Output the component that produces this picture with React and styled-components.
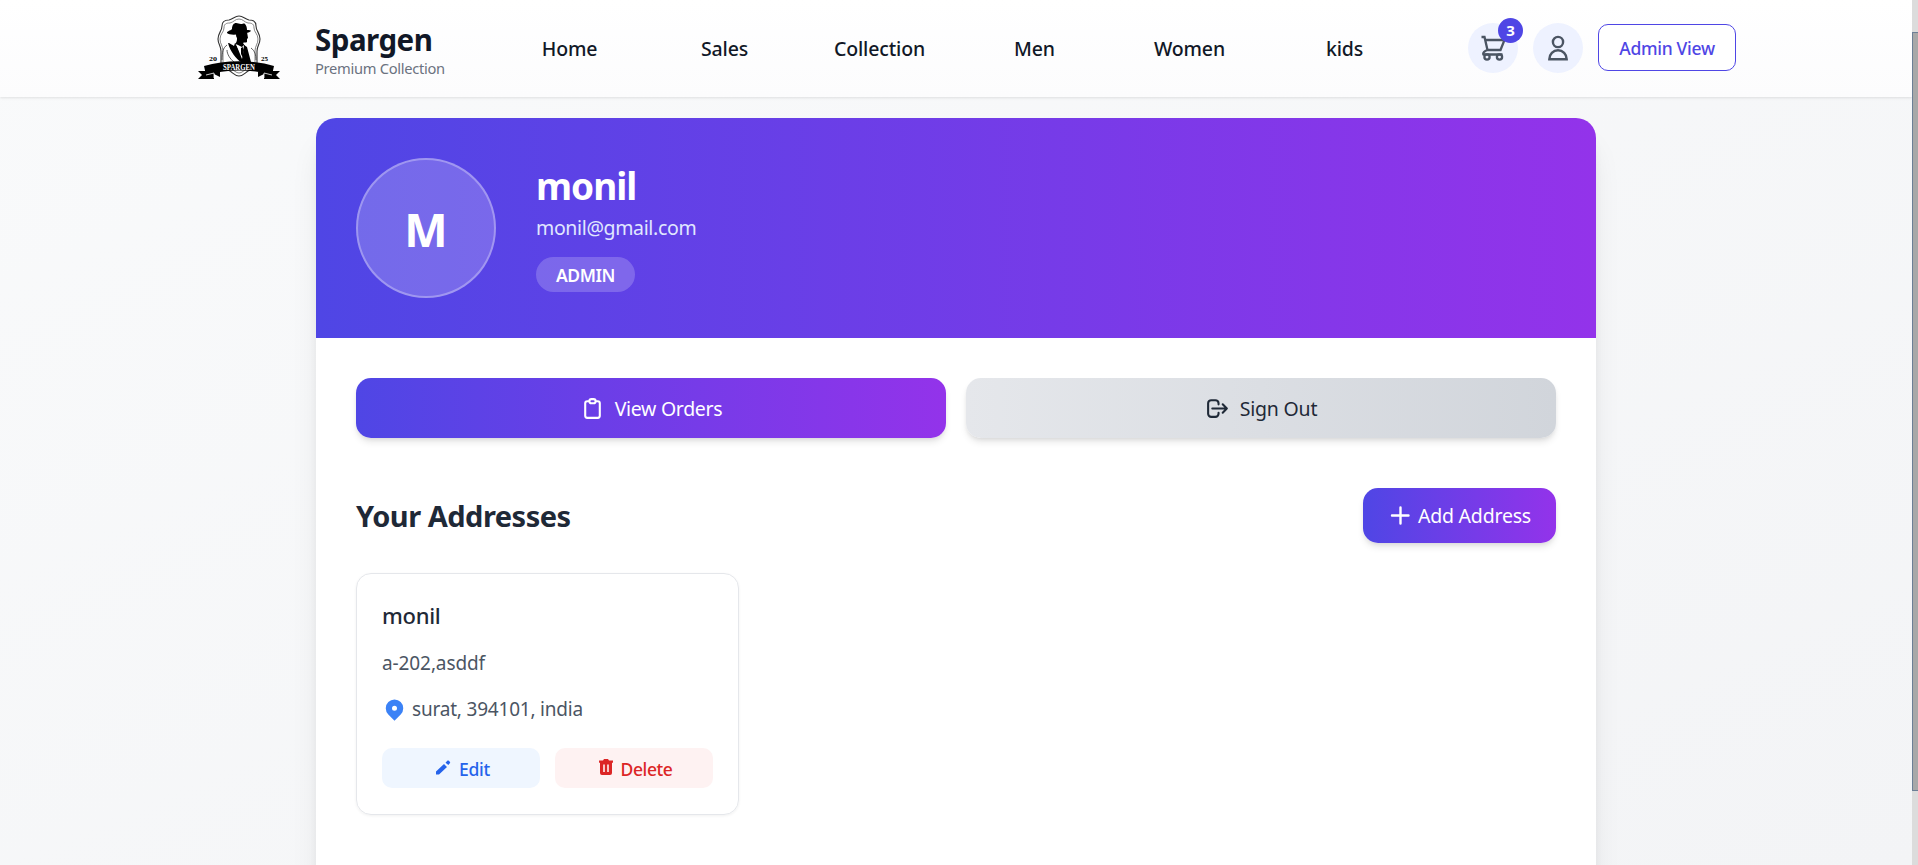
import React from 'react';
import styled, { createGlobalStyle } from 'styled-components';

const Global = createGlobalStyle`
  *{box-sizing:border-box}
  html,body{margin:0;height:865px;overflow:hidden}
  body{font-family:"Noto Sans","Open Sans",sans-serif;color:#1f2937}
  button{font-family:inherit;cursor:pointer}
`;
const brand = 'linear-gradient(to right,#4f46e5,#9333ea)';

const Text = styled.span`
  display:block;white-space:nowrap;margin:0;
  font-size:${p => p.$size}px;line-height:${p => p.$lh || p.$size * 1.4}px;
  font-weight:${p => p.$weight || 400};letter-spacing:${p => p.$track || 0}px;
  color:${p => p.$color || 'inherit'};
`;
const Screen = styled.div`display:flex;height:865px;width:1918px;overflow:hidden;`;
const Page = styled.div`
  width:1912px;flex:none;display:flex;flex-direction:column;
  background:linear-gradient(to bottom right,#f9fafb,#f3f4f6);
`;
const ScrollTrack = styled.div`flex:1;background:#dcdcdc;padding-top:32px;height:865px;`;
const ScrollThumb = styled.div`height:759px;background:#a8a8a8;border:1px solid #6c7f96;border-right:0;`;

const Header = styled.header`
  height:97px;flex:none;display:flex;align-items:center;padding:0 0 1px 196px;
  background:linear-gradient(to bottom,#fff,#fcfcfd);
  box-shadow:0 1px 3px rgba(0,0,0,.08),0 1px 2px rgba(0,0,0,.03);
`;
const Logo = styled.svg`width:84px;height:68px;flex:none;margin-top:2px;`;
const BrandName = styled.div`margin-left:35px;width:177px;padding-top:4px;`;
const Nav = styled.nav`display:flex;`;
const NavItem = styled.a`width:155px;display:flex;justify-content:center;padding-top:1px;`;
const HeaderActions = styled.div`display:flex;gap:15px;align-items:center;margin-left:46px;`;
const RoundButton = styled.div`
  position:relative;width:50px;height:50px;border-radius:50%;background:#eef2ff;color:#4b5563;
  display:flex;align-items:center;justify-content:center;
`;
const Badge = styled.div`
  position:absolute;top:-5px;right:-5px;width:25px;height:25px;border-radius:50%;
  background:#4f46e5;color:#fff;display:flex;align-items:center;justify-content:center;
`;
const OutlineButton = styled.button`
  width:138px;height:47px;margin-bottom:1px;border:1px solid #4f46e5;border-radius:10px;background:#fff;color:#4f46e5;
  display:flex;align-items:center;justify-content:center;padding:2px 0 0;
`;

const Card = styled.main`
  width:1280px;height:900px;flex:none;margin:21px 0 0 316px;border-radius:20px;overflow:hidden;background:#fff;
  box-shadow:0 25px 31px -6px rgba(0,0,0,.1),0 10px 13px -6px rgba(0,0,0,.1);
`;
const Profile = styled.section`
  height:220px;padding:0 40px;display:flex;align-items:center;gap:40px;background:${brand};color:#fff;
`;
const Avatar = styled.div`
  width:140px;height:140px;border-radius:50%;background:rgba(255,255,255,.2);
  border:2px solid rgba(255,255,255,.3);display:flex;align-items:center;justify-content:center;padding-top:3px;
`;
const Identity = styled.div`display:flex;flex-direction:column;align-items:flex-start;`;
const Role = styled.div`
  margin-top:9px;width:99px;height:35px;border-radius:18px;background:rgba(255,255,255,.2);
  display:flex;align-items:center;justify-content:center;padding-top:2px;
`;
const Body = styled.section`padding:40px;`;
const ActionRow = styled.div`display:grid;grid-template-columns:1fr 1fr;gap:20px;`;
const ActionButton = styled.button`
  height:${p => p.$h || 60}px;padding:${p => p.$pad || '0'};border:0;border-radius:15px;
  display:flex;align-items:center;justify-content:center;gap:${p => p.$gap || 10}px;
  color:${p => (p.$muted ? '#1f2937' : '#fff')};
  background:${p => (p.$muted ? 'linear-gradient(to right,#e5e7eb,#d1d5db)' : brand)};
  box-shadow:0 5px 7px -1px rgba(0,0,0,.1),0 2.5px 5px -2.5px rgba(0,0,0,.1);
  & > span{padding-top:1px}
`;
const SectionHead = styled.div`display:flex;justify-content:space-between;align-items:center;margin-top:50px;height:55px;`;
const Heading = styled.h2`margin:2px 0 0;font-weight:inherit;`;
const AddressCard = styled.article`
  width:383px;height:242px;margin-top:30px;border:1px solid #e5e7eb;border-radius:15px;padding:24px 25px;
  box-shadow:0 1px 3px rgba(0,0,0,.06);
`;
const Place = styled.div`display:flex;align-items:center;gap:5px;height:30px;`;
const CardActions = styled.div`display:grid;grid-template-columns:1fr 1fr;gap:15px;margin-top:24px;`;
const SoftButton = styled.button`
  height:40px;border:0;border-radius:10px;padding:0 0 0 3px;display:flex;align-items:center;justify-content:center;gap:8px;
  background:${p => (p.$danger ? '#fef2f2' : '#eff6ff')};color:${p => (p.$danger ? '#dc2626' : '#2563eb')};
  & > span{padding-top:2px}
`;

function SpargenLogo() {
  return (
    <Logo viewBox="0 0 84 68">
      <path d="M43 1c4 0 6 3 10 4 4 0 7 2 7 6 0 5 4 7 4 13 0 5-3 7-3 12v13c-1 5-5 5-9 7-3 2-5 5-9 5s-6-3-9-5c-4-2-8-2-9-7V36c0-5-3-7-3-12 0-6 4-8 4-13 0-4 3-6 7-6 4-1 6-4 10-4z" fill="#fff" stroke="#333" strokeWidth="1.1" />
      <path d="M43 4c4 0 5 3 9 4 4 0 6 1 6 5 0 4 4 6 4 11s-3 7-3 12v12c-1 4-5 4-8 6-3 1-5 4-8 4s-5-3-8-4c-3-2-7-2-8-6V36c0-5-3-7-3-12s4-7 4-11c0-4 2-5 6-5 4-1 5-4 9-4z" fill="none" stroke="#666" strokeWidth=".8" />
      <path d="M36 14c0-4 2-6 4-6 2 0 3 1 5 1s3-1 4 0c1 1 2 3 2 6 2 0 4 0 4 1-2 2-6 2.500-11 3-5 1-11 1-13-1 0-2 3-2 5-4z" fill="#000" />
      <path d="M40 18l11-1 1 6-1 1v3c-1 1-3 0-4 1l2 3-3 3-7-5c2-2 2-4 2-6-1-1-1-3-1-5z" fill="#000" />
      <path d="M32 28c2 0 4 2 6 3l1-3 7 12v8C40 44 34 36 32 28zM48 30l3 2 4 15H45l2-8z" fill="#000" />
      <path d="m40 29 6 3 2-2-1 9-1 5z" fill="#fff" /><path d="m45 33 2-1 1 3-1 8-2-4z" fill="#000" />
      <path d="M31 30c-4 3-5 7-5 15M31 35c0 4 3 9 7 12M55 33c4 3 5 7 5 12" fill="none" stroke="#333" strokeWidth=".8" />
      <path d="M9 56H2l4 4-4 4h16v-5l6 3v-5zM77 56h7l-4 4 4 4H68v-5l-6 3v-5z" fill="#000" />
      <path d="M8 51c21-6.500 49-6.500 70 0l-2 9c-19-6-47-6-66 0z" fill="#000" />
      <path d="m10 60 8-2v5M76 60l-8-2v5" fill="none" stroke="#fff" strokeWidth=".8" />
      <text x="43" y="54.500" textAnchor="middle" fontSize="8" fontWeight="700" fill="#fff" fontFamily="Liberation Serif,serif" textLength="32" lengthAdjust="spacingAndGlyphs">SPARGEN</text>
      <text x="13" y="45.500" fontSize="6.500" fontWeight="700" fontFamily="Liberation Serif,serif" textLength="8" lengthAdjust="spacingAndGlyphs">20</text>
      <text x="65" y="45.500" fontSize="6.500" fontWeight="700" fontFamily="Liberation Serif,serif" textLength="7" lengthAdjust="spacingAndGlyphs">25</text>
    </Logo>
  );
}
const CartIcon = () => (
  <svg width="26" height="26" viewBox="0 0 26 26" fill="none" stroke="currentColor" strokeWidth="2.3">
    <path d="M1.500 2h3l3 13h13l4-10H5.500M7.500 15c-3 1-5 3-4 4.500h19" />
    <circle cx="7" cy="22" r="2.600" /><circle cx="19.500" cy="22" r="2.600" />
  </svg>
);
const UserIcon = () => (
  <svg width="22" height="26" viewBox="0 0 22 26" fill="none" stroke="currentColor" strokeWidth="2.4">
    <circle cx="11" cy="7" r="5.100" /><path d="M2.300 24.300a8.700 9 0 0 1 17.400 0z" />
  </svg>
);
const ClipboardIcon = () => (
  <svg width="25" height="25" viewBox="0 0 24 24" fill="none" stroke="currentColor" strokeWidth="2" strokeLinecap="round" strokeLinejoin="round">
    <path d="M9 5H7a2 2 0 0 0-2 2v12a2 2 0 0 0 2 2h10a2 2 0 0 0 2-2V7a2 2 0 0 0-2-2h-2M9 5a2 2 0 0 0 2 2h2a2 2 0 0 0 2-2M9 5a2 2 0 0 1 2-2h2a2 2 0 0 1 2 2" />
  </svg>
);
const SignOutIcon = () => (
  <svg width="25" height="25" viewBox="0 0 24 24" fill="none" stroke="currentColor" strokeWidth="2" strokeLinecap="round" strokeLinejoin="round">
    <path d="m17 16 4-4m0 0-4-4m4 4H7m6 4v1a3 3 0 0 1-3 3H6a3 3 0 0 1-3-3V7a3 3 0 0 1 3-3h4a3 3 0 0 1 3 3v1" />
  </svg>
);
const PlusIcon = () => (
  <svg width="20" height="20" viewBox="0 0 20 20" fill="none" stroke="currentColor" strokeWidth="2.4" strokeLinecap="round"><path d="M10.500 1.500v16M2 9.500h16.500" /></svg>
);
const PinIcon = () => (
  <svg width="25" height="25" viewBox="0 0 20 20" fill="#3b82f6">
    <path fillRule="evenodd" d="M5.05 4.05a7 7 0 1 1 9.9 9.9L10 18.9l-4.95-4.95a7 7 0 0 1 0-9.9zM10 11a2 2 0 1 0 0-4 2 2 0 0 0 0 4z" />
  </svg>
);
const PencilIcon = () => (
  <svg width="16" height="18" viewBox="0 0 16 18" fill="currentColor"><path d="M1 12.500 9 5l3 3-8 7.500H1zM10.500 3.700l1.800-1.900c.5-.5 1-.5 1.500 0l1 1c.5.5.5 1 0 1.500L13.300 6z" /></svg>
);
const TrashIcon = () => (
  <svg width="14" height="18" viewBox="0 0 14 18" fill="currentColor"><path fillRule="evenodd" d="M0 1.500h4L5 0h4l1 1.500h4v2.300h-1V14q0 2-2 2H3q-2 0-2-2V3.800H0zM4.200 5.500v7.500h1.600V5.500zM8.200 5.500v7.500h1.600V5.500z" /></svg>
);

const links = ['Home', 'Sales', 'Collection', 'Men', 'Women', 'kids'];

export default function App() {
  return (
    <>
      <Global />
      <Screen>
        <Page>
          <Header>
            <SpargenLogo />
            <BrandName>
              <Text $size={29.5} $lh={35} $weight={700} $track={-0.5} $color="#111827">Spargen</Text>
              <Text $size={14.700} $lh={22} $track={-0.3} $color="#6b7280">Premium Collection</Text>
            </BrandName>
            <Nav>{links.map(l => <NavItem key={l}><Text $size={19.5} $weight={500} $track={-0.15} $color="#111827">{l}</Text></NavItem>)}</Nav>
            <HeaderActions>
              <RoundButton><CartIcon /><Badge><Text $size={15} $weight={700}>3</Text></Badge></RoundButton>
              <RoundButton><UserIcon /></RoundButton>
              <OutlineButton><Text $size={17.5} $weight={500} $track={-0.3}>Admin View</Text></OutlineButton>
            </HeaderActions>
          </Header>
          <Card>
            <Profile>
              <Avatar><Text $size={46} $weight={700}>M</Text></Avatar>
              <Identity>
                <Text $size={37} $lh={44} $weight={700} $track={-1}>monil</Text>
                <Text $size={19.5} $lh={40} $track={-0.35} $color="#e0e7ff">monil@gmail.com</Text>
                <Role><Text $size={17.5} $weight={600} $track={-0.4}>ADMIN</Text></Role>
              </Identity>
            </Profile>
            <Body>
              <ActionRow>
                <ActionButton><ClipboardIcon /><Text $size={19.5} $track={-0.3}>View Orders</Text></ActionButton>
                <ActionButton $muted><SignOutIcon /><Text $size={19.5} $track={-0.2}>Sign Out</Text></ActionButton>
              </ActionRow>
              <SectionHead>
                <Heading><Text $size={29} $weight={700} $track={-0.5}>Your Addresses</Text></Heading>
                <ActionButton $h={55} $gap={8} $pad="0 25px 0 27px"><PlusIcon /><Text $size={19.5} $track={-0.2}>Add Address</Text></ActionButton>
              </SectionHead>
              <AddressCard>
                <Text $size={22} $lh={35} $weight={500} $track={-0.3}>monil</Text>
                <Text as="p" $size={19} $lh={61} $track={-0.1} $color="#4b5563">a-202,asddf</Text>
                <Place><PinIcon /><Text $size={19} $track={-0.2} $color="#4b5563">surat, 394101, india</Text></Place>
                <CardActions>
                  <SoftButton><PencilIcon /><Text $size={17.5} $weight={500} $track={-0.3}>Edit</Text></SoftButton>
                  <SoftButton $danger><TrashIcon /><Text $size={17.5} $weight={500} $track={-0.4}>Delete</Text></SoftButton>
                </CardActions>
              </AddressCard>
            </Body>
          </Card>
        </Page>
        <ScrollTrack><ScrollThumb /></ScrollTrack>
      </Screen>
    </>
  );
}
